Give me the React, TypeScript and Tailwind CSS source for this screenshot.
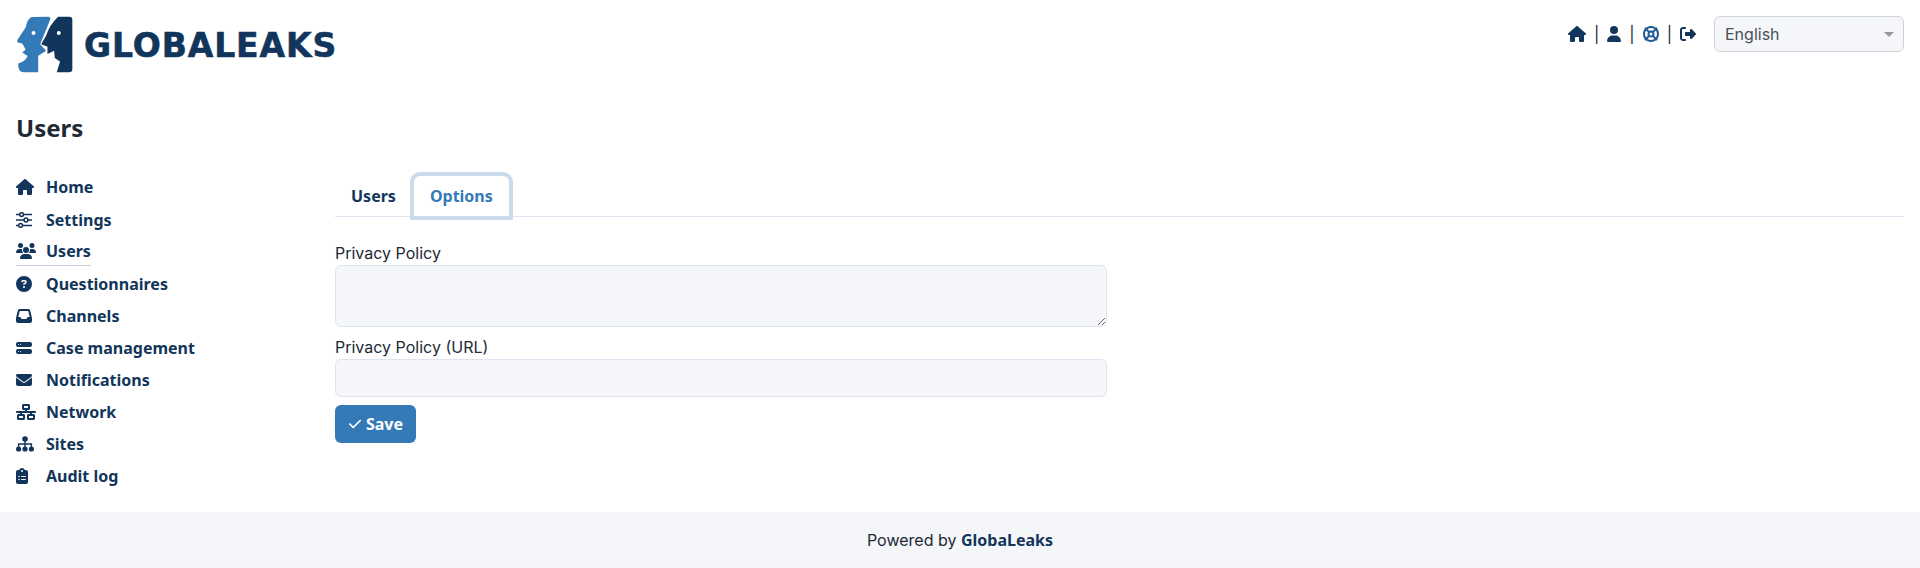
import React from "react";
import {
  FaHouse, FaUsers, FaCircleQuestion, FaInbox, FaEnvelope, FaNetworkWired, FaClipboardList,
  FaUser, FaLifeRing, FaRightFromBracket, FaCheck,
} from "react-icons/fa6";
import { BsHddStackFill } from "react-icons/bs";

function Sites({ className }: { className?: string }) {
  return (
    <svg viewBox="0 0 18 16" className={className} aria-hidden="true" fill="currentColor">
      <circle cx="9" cy="3" r="2.8" />
      <circle cx="2.6" cy="13" r="2.6" />
      <circle cx="9" cy="13" r="2.6" />
      <circle cx="15.4" cy="13" r="2.6" />
      <path d="M8.3 4h1.4v3.3h6.4V12h-1.4V8.7H9.7V12H8.3V8.7H3.3V12H1.9V7.3h6.4z" />
    </svg>
  );
}

function Sliders({ className }: { className?: string }) {
  return (
    <svg viewBox="0 0 16 16" className={className} aria-hidden="true" fill="none" stroke="currentColor" strokeWidth="1.5">
      <path d="M0 2.6h3.6M7.6 2.6H16M0 8h8M12 8h4M0 13.4h2.6M6.6 13.4H16" />
      <circle cx="5.6" cy="2.6" r="1.9" />
      <circle cx="10" cy="8" r="1.9" />
      <circle cx="4.6" cy="13.4" r="1.9" />
    </svg>
  );
}

const nav = [
  { icon: FaHouse, label: "Home", cls: "h-[16px] w-[18px]" },
  { icon: Sliders, label: "Settings", cls: "h-[16px] w-[16px]" },
  { icon: FaUsers, label: "Users", active: true, cls: "h-[16px] w-[20px]" },
  { icon: FaCircleQuestion, label: "Questionnaires", cls: "h-[16px] w-[16px]" },
  { icon: FaInbox, label: "Channels", cls: "h-[16px] w-[16px]" },
  { icon: BsHddStackFill, label: "Case management", cls: "h-[16px] w-[16px]" },
  { icon: FaEnvelope, label: "Notifications", cls: "h-[16px] w-[16px]" },
  { icon: FaNetworkWired, label: "Network", cls: "h-[16px] w-[20px]" },
  { icon: Sites, label: "Sites", cls: "h-[16px] w-[18px]" },
  { icon: FaClipboardList, label: "Audit log", cls: "h-[16px] w-[12px]" },
];

function Logo() {
  return (
    <div className="flex items-center">
      <svg viewBox="45 45 175 175" className="w-[58px] h-[58px] shrink-0" aria-hidden="true">
        <path fill="#337ab7" d="M92 48 L142 47 Q151 47 148 56 L118 130 L136 150 L112 165 L112 215 L68 215 Q54 213 52 198 L52 188 Q72 184 80 166 L64 155 L74 146 L64 128 L50 125 Q47 122 50 116 L75 78 Q78 56 92 48 Z" />
        <circle cx="98" cy="96" r="6" fill="#fff" />
        <path fill="#12355b" d="M172 47 L205 47 Q215 47 215 57 L215 205 Q215 215 205 215 L168 215 L178 182 L162 172 L160 150 L140 160 L140 138 L121 130 L136 104 Q146 72 172 47 Z" />
        <circle cx="174" cy="96" r="6" fill="#fff" />
      </svg>
      <span className="ml-[10px] font-['DejaVu_Sans',sans-serif] font-bold text-[33px] leading-none tracking-[0.9px] [-webkit-text-stroke:0.6px_#12355b] text-[#12355b]">GLOBALEAKS</span>
    </div>
  );
}

export default function App() {
  return (
    <div className="min-h-[568px] flex flex-col bg-white font-['Inter',sans-serif] text-[16px] text-[#212934]">
      <header className="flex items-start justify-between pl-4 pr-4 pt-4 h-[100px]">
        <Logo />
        <div className="flex items-center h-9">
          <div className="flex items-center text-[#12355b] mr-[18px]">
            <FaHouse className="w-[18px] h-[16px]" />
            <span className="mx-[8px] text-[#212934]">|</span>
            <FaUser className="w-[14px] h-[16px]" />
            <span className="mx-[8px] text-[#212934]">|</span>
            <FaLifeRing className="w-[16px] h-[16px] text-[#1f5a93]" />
            <span className="mx-[8px] text-[#212934]">|</span>
            <FaRightFromBracket className="w-[16px] h-[16px]" />
          </div>
          <div className="relative w-[190px] h-9 rounded-[6px] border border-[#cfd2d6] bg-[#f5f6fa] pl-[10px] flex items-center text-[#495057]">
            English
            <span className="absolute right-[9px] top-[15px] w-0 h-0 border-l-[5px] border-r-[5px] border-t-[5px] border-l-transparent border-r-transparent border-t-[#999]" />
          </div>
        </div>
      </header>

      <h1 className="pl-4 font-['Noto_Sans',sans-serif] font-bold text-[24px] leading-[36px] h-[61px] pt-[10px] text-[#212934] box-content">Users</h1>

      <div className="flex flex-1">
        <nav className="w-[335px] shrink-0 pl-4 pt-[0.4px] font-['Noto_Sans',sans-serif] font-bold text-[#12355b]">
          {nav.map(({ icon: Icon, label, active, cls }) => (
            <div key={label} className="h-[32.12px] flex items-center">
              <div className={"flex items-center h-[28px] " + (active ? "border-b border-[#c6d0e0]" : "")}>
                <span className="w-[30px] flex items-center"><Icon className={cls} /></span>
                <span>{label}</span>
              </div>
            </div>
          ))}
        </nav>
        <main className="flex-1 pr-4 pt-[5px]">
          <div className="flex h-[40px] border-b border-[#dfe3ef] font-['Noto_Sans',sans-serif] font-bold box-content">
            <div className="px-4 flex items-center text-[#12355b]">Users</div>
            <div className="relative px-4 flex items-center text-[#337ab7] rounded-t-[6px] shadow-[0_0_0_4px_#c9dbed] bg-white ml-[2px] h-[40px]">Options</div>
          </div>
          <div className="w-[772px] pt-[24px]">
            <label className="block leading-[24px] h-[24px]">Privacy Policy</label>
            <textarea className="block w-full h-[62px] rounded-[6px] border border-[#dfe3ef] bg-[#f5f6fa] outline-none" />
            <label className="block leading-[24px] pt-[8px]">Privacy Policy (URL)</label>
            <input className="block w-full h-[38px] rounded-[6px] border border-[#dfe3ef] bg-[#f5f6fa] outline-none" />
            <button className="mt-2 h-[38px] w-[81px] rounded-[6px] bg-[#337ab7] text-white font-['Noto_Sans',sans-serif] font-bold flex items-center justify-center gap-[4px]">
              <FaCheck className="w-[14px] h-[14px]" />Save
            </button>
          </div>
        </main>
      </div>

      <footer className="h-[56px] bg-[#f5f6fa] flex items-center justify-center">
        <span>Powered by <span className="font-['Noto_Sans',sans-serif] font-bold text-[#12355b]">GlobaLeaks</span></span>
      </footer>
    </div>
  );
}
